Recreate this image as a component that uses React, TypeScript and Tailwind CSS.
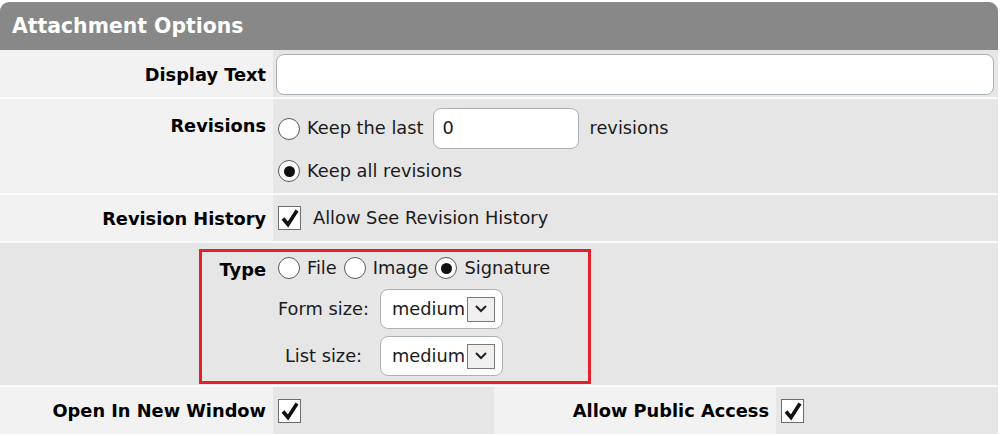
import React from 'react';

const font = "font-['DejaVu_Sans','Verdana',sans-serif]";

function Radio({ checked = false }: { checked?: boolean }) {
  return (
    <span className="flex h-[22px] w-[22px] shrink-0 items-center justify-center rounded-full border border-[#5a5a5a] bg-white">
      {checked && <span className="h-[11px] w-[11px] rounded-full bg-[#111]" />}
    </span>
  );
}

function Checkbox() {
  return (
    <span className="flex h-[24px] w-[23px] shrink-0 items-center justify-center border-[1.5px] border-[#6b6b6b] bg-white">
      <svg viewBox="0 0 20 20" className="h-[20px] w-[20px]">
        <path d="M3 10.5 L8 16.5 L17 2.5" fill="none" stroke="#111" strokeWidth="3.6" strokeLinejoin="miter" />
      </svg>
    </span>
  );
}

function SizeSelect() {
  return (
    <div className="flex h-[40px] w-[123px] items-center justify-between rounded-[8px] border border-[#a9b1b6] bg-white pl-[11px] pr-[7px]">
      <span>medium</span>
      <span className="flex h-[25px] w-[28px] items-center justify-center border border-[#7a7a7a] bg-[#f0f0f0]">
        <svg viewBox="0 0 14 10" className="h-[10px] w-[14px]">
          <path d="M2 2 L7 7 L12 2" fill="none" stroke="#222" strokeWidth="2" />
        </svg>
      </span>
    </div>
  );
}

export default function App() {
  const label = 'bg-[#f2f2f2] pr-[7px] text-right font-bold text-black';
  const value = 'bg-[#e6e6e6]';

  return (
    <div className={`h-[436px] w-[1000px] bg-white pt-[2px] text-[17.8px] text-[#1a1a1a] ${font}`}>
      <div className="w-[998px]">
        <div className="flex h-[48px] items-center rounded-t-[9px] bg-[#888888] px-[12px] text-[20.4px] font-bold text-white">
          Attachment Options
        </div>

        <div className="flex flex-col gap-[2px] bg-[#fafafa]">
          <div className="grid h-[47px] grid-cols-[273px_1fr]">
            <div className={`${label} flex items-center justify-end pt-[3px]`}>Display Text</div>
            <div className={`${value} flex items-center pl-[3px] pr-[4px] pt-[2px]`}>
              <div className="h-[41px] w-full rounded-[8px] border border-[#a9b1b6] bg-white" />
            </div>
          </div>

          <div className="grid h-[94px] grid-cols-[273px_1fr]">
            <div className={`${label} pt-[14px]`}>Revisions</div>
            <div className={`${value} pl-[5px] pt-[9px]`}>
              <div className="flex h-[41px] items-center">
                <Radio />
                <span className="ml-[7px]">Keep the last</span>
                <div className="ml-[9px] flex h-[41px] w-[146px] items-center rounded-[8px] border border-[#a9b1b6] bg-white pl-[9px]">
                  0
                </div>
                <span className="ml-[11px]">revisions</span>
              </div>
              <div className="flex h-[44px] items-center">
                <Radio checked />
                <span className="ml-[7px]">Keep all revisions</span>
              </div>
            </div>
          </div>

          <div className="grid h-[46px] grid-cols-[273px_1fr]">
            <div className={`${label} flex items-center justify-end pt-[2px]`}>Revision History</div>
            <div className={`${value} flex items-center pl-[5px]`}>
              <Checkbox />
              <span className="ml-[12px]">Allow See Revision History</span>
            </div>
          </div>

          <div className="relative grid h-[142px] grid-cols-[273px_1fr] bg-[#e6e6e6]">
            <div className="pr-[7px] pt-[14px] text-right font-bold text-black">Type</div>
            <div className="pl-[5px] pt-[14px]">
              <div className="flex h-[22px] items-center">
                <Radio />
                <span className="ml-[7px]">File</span>
                <span className="ml-[7px]"><Radio /></span>
                <span className="ml-[7px]">Image</span>
                <span className="ml-[7px]"><Radio checked /></span>
                <span className="ml-[7px]">Signature</span>
              </div>
              <div className="mt-[10px] flex h-[40px] items-center">
                <span className="-ml-[3px] w-[97px] text-center">Form size:</span>
                <span className="ml-[8px]"><SizeSelect /></span>
              </div>
              <div className="mt-[7px] flex h-[40px] items-center">
                <span className="-ml-[3px] w-[97px] text-center">List size:</span>
                <span className="ml-[8px]"><SizeSelect /></span>
              </div>
            </div>
            <div className="pointer-events-none absolute left-[199px] top-[6px] h-[135px] w-[392px] border-[3px] border-[#e5202b]" />
          </div>

          <div className="grid h-[47px] grid-cols-[273px_221px_282px_1fr]">
            <div className={`${label} flex items-center justify-end pt-[2px]`}>Open In New Window</div>
            <div className={`${value} flex items-center pl-[5px]`}>
              <Checkbox />
            </div>
            <div className={`${label} flex items-center justify-end pt-[2px]`}>Allow Public Access</div>
            <div className={`${value} flex items-center pl-[5px]`}>
              <Checkbox />
            </div>
          </div>
        </div>
      </div>
    </div>
  );
}
